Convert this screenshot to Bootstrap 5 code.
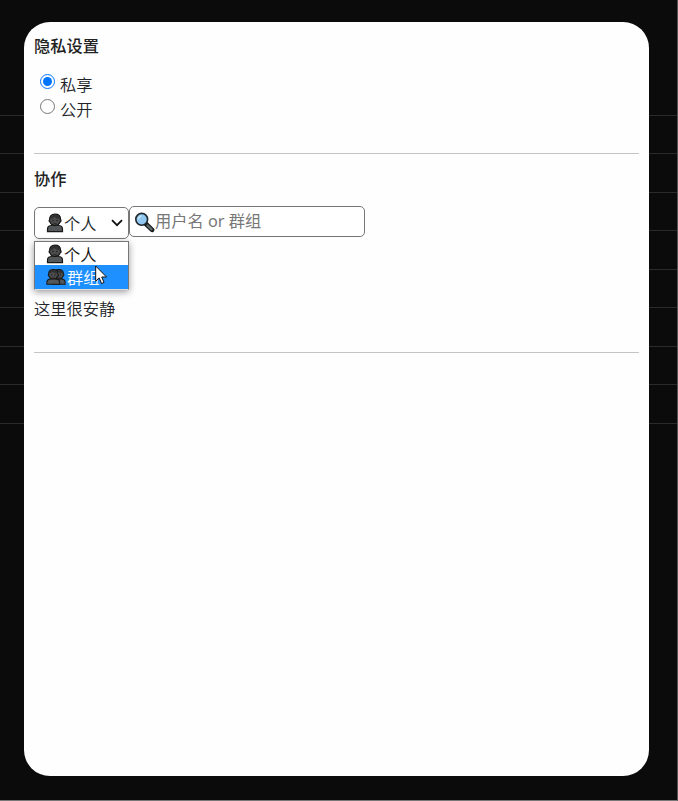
<!DOCTYPE html>
<html lang="zh-CN">
<head>
<meta charset="utf-8">
<meta name="viewport" content="width=device-width, initial-scale=1">
<title>隐私设置</title>
<link href="https://cdn.jsdelivr.net/npm/bootstrap@5.3.0/dist/css/bootstrap.min.css" rel="stylesheet">
<style>
body{font-family:"Noto Sans","Noto Sans CJK SC",sans-serif;font-size:16.25px;line-height:24px;color:#212529;background:#0b0b0b}
.page{width:678px;height:801px;padding:22px 28px 24px 24px;border-right:1px solid #555;border-bottom:1px solid #777;background:#0b0b0b}
.backdrop-rows{left:0;right:0;top:77px}
.backdrop-rows div{height:38.5px;border-bottom:1px solid #2b2b2b}
.dialog-panel{width:625px;height:754px;border-radius:26px;background:#fefefe;padding:11px 10px}
.cjk{font-family:"Noto Sans CJK SC",sans-serif;font-weight:350}
.heading{font-size:16.25px;font-weight:600;line-height:24px;color:#222}
.heading.cjk{font-weight:500}
.choice{height:25px;padding-left:6px;gap:5px}
.choice input{width:15px;height:15px;margin:0;accent-color:#0075ff}
.choice label{line-height:24px;padding-top:4px}
.rule{height:1px;background:#c4c4c4}
.picker{width:95px;height:32px;border:1px solid #767676;border-radius:5px;padding:0 5px 0 11px;background:#fff}
.finder{width:236px;height:31px;margin-top:-1px;border:1px solid #767676;border-radius:5px;padding-left:4px;color:#777;background:#fff}
.finder span{line-height:22px;padding-bottom:2px}
.options{top:34px;left:0;width:95px;height:49px;border:1px solid #777;border-bottom-color:#ddd;background:#fff;box-shadow:0 2px 7px rgba(0,0,0,.4);z-index:2}
.options .opt{height:23px;padding-left:11px;color:#111;line-height:22px}
.options .opt.on{height:24px;background:#1e90ff;color:#fff}
.options .opt.on span{padding-bottom:1px}
.pointer{left:60px;top:23px;z-index:3}
svg{display:block;flex:none}
</style>
</head>
<body>
<svg width="0" height="0" class="position-absolute" aria-hidden="true">
<defs>
<symbol id="person" viewBox="0 0 18 20">
<path d="M1.5 18.6v-2.5q0-3.1 3.3-3.6l2.2-.5h4l2.2.5q3.3.5 3.3 3.6v2.5z" fill="#55585a" stroke="#191919" stroke-width="1.2"/>
<path d="M6.8 10.5v2.1q2.2 1.8 4.4 0v-2.1z" fill="#4c4c4c"/>
<path d="M3.6 6.6Q3.4 1.2 9 1.2t5.5 5.3q1 .6.3 1.9l-.9.8q-.8 3.2-4.9 3.2T4.2 9.2q-1.8-1.1-.6-2.6z" fill="#4d4d4d" stroke="#151515" stroke-width="1.2"/>
<path d="M4 6Q4.3 1.7 9 1.8q4.7 0 5 4.5Q10.4 5.9 8.2 3.9 7 5.7 4 6z" fill="#303030"/>
<circle cx="7" cy="7.4" r=".7" fill="#111"/><circle cx="11" cy="7.4" r=".7" fill="#111"/>
<path d="M7.3 10.1q1.7.8 3.4 0" fill="none" stroke="#222" stroke-width=".8"/>
</symbol>
</defs>
</svg>
<main class="page position-relative overflow-hidden">
<div class="backdrop-rows position-absolute" aria-hidden="true"><div></div><div></div><div></div><div></div><div></div><div></div><div></div><div></div><div></div></div>
<section class="dialog-panel position-relative d-flex flex-column">
<h2 class="heading cjk" style="margin-bottom:12px">隐私设置</h2>
<div class="choice d-flex align-items-center"><input type="radio" name="visibility" id="private" checked><label for="private" class="cjk">私享</label></div>
<div class="choice d-flex align-items-center"><input type="radio" name="visibility" id="public"><label for="public" class="cjk">公开</label></div>
<div class="rule" style="margin-top:34px"></div>
<h2 class="heading cjk" style="margin-top:12px;margin-bottom:17px">协作</h2>
<div class="position-relative d-flex align-items-start">
<div class="picker d-flex align-items-center" role="combobox" aria-expanded="true">
<svg width="18" height="20"><use href="#person"/></svg><span class="cjk">个人</span>
<svg class="ms-auto" width="12" height="8" viewBox="0 0 12 8"><path d="M1 1.2l5 5 5-5" fill="none" stroke="#111" stroke-width="1.8"/></svg>
</div>
<div class="finder d-flex align-items-center">
<svg width="21" height="22" viewBox="0 0 21 22"><path d="M11.5 12.5l6.6 6.3" stroke="#151515" stroke-width="4.6" stroke-linecap="round"/><path d="M13.4 14.4l4.2 4" stroke="#5e6d6b" stroke-width="2.2" stroke-linecap="round"/><circle cx="7.7" cy="8.3" r="5.9" fill="#91c9f2" stroke="#20272c" stroke-width="1.6"/><path d="M4.3 8.5q.2-3.2 3.2-3.6" fill="none" stroke="#c4e3f8" stroke-width="1.5"/></svg>
<span>用户名 or 群组</span>
</div>
<div class="options position-absolute" role="listbox">
<div class="opt d-flex align-items-center"><svg width="18" height="20"><use href="#person"/></svg><span class="cjk">个人</span></div>
<div class="opt on d-flex align-items-center"><svg width="21" height="20" viewBox="0 0 21 20"><use href="#person" x="5" y="1.5" width="15.5" height="17"/><use href="#person" x="-.5" y="1.5" width="15.5" height="17"/></svg><span class="cjk">群组</span></div>
<svg class="pointer position-absolute" width="13" height="20" viewBox="0 0 13 20"><path d="M.7 1v15.2l3.5-3.3 2.4 5.6 2.5-1.1-2.4-5.4h4.8z" fill="#fff" stroke="#111" stroke-width="1"/></svg>
</div>
</div>
<p class="cjk mb-0" style="margin-top:57px">这里很安静</p>
<div class="rule" style="margin-top:32px"></div>
</section>
</main>
<script src="https://cdn.jsdelivr.net/npm/bootstrap@5.3.0/dist/js/bootstrap.bundle.min.js"></script>
</body>
</html>
